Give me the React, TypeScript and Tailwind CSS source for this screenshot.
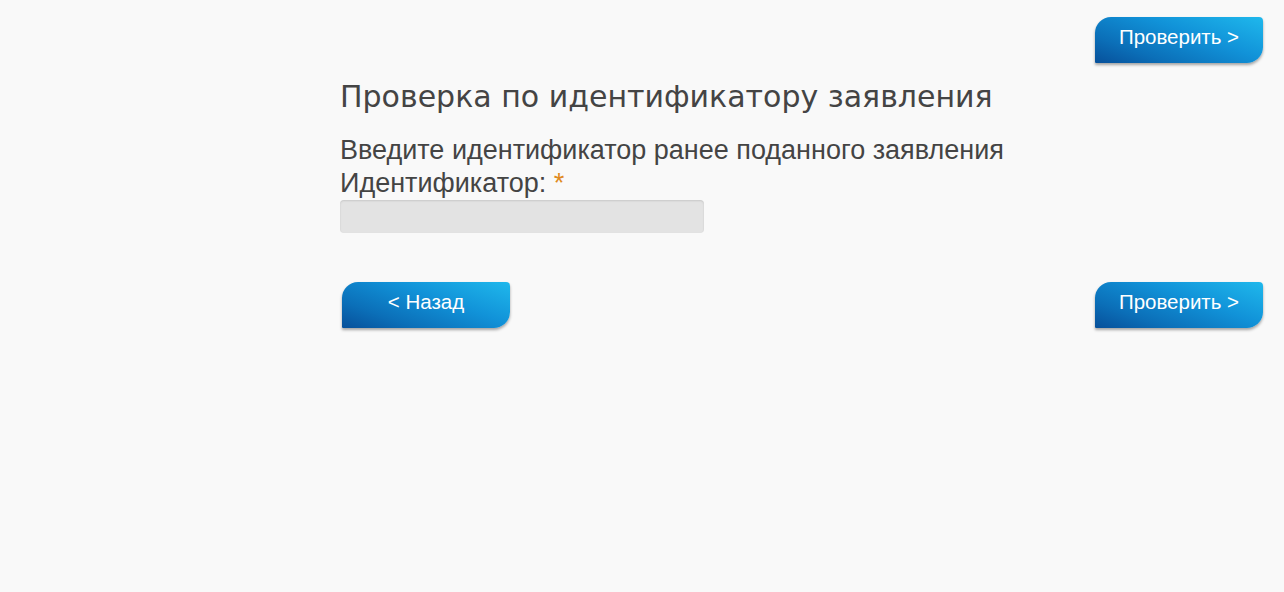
import React from 'react';

function BlueButton({ children }: { children: React.ReactNode }) {
    return (
        <button
            type="button"
            className="w-[168px] h-[46px] rounded-tl-[16px] rounded-br-[16px] rounded-tr-[4px] rounded-bl-[1px] bg-[linear-gradient(200deg,#1fb8ec_0%,#1192d8_40%,#0b6fb8_75%,#07509a_100%)] shadow-[0_2px_3px_rgba(0,0,0,0.35)] text-white text-[20.5px] leading-none font-['Liberation_Sans',Arial,sans-serif] flex items-center justify-center pb-[5px]"
        >
            {children}
        </button>
    );
}

export default function App() {
    return (
        <div className="min-h-[592px] bg-[#f9f9f9] text-[#444] font-['Liberation_Sans',Arial,sans-serif]">
            <div className="ml-[340px] mr-[21px] pt-[17px]">
                <div className="flex justify-end">
                    <BlueButton>Проверить &gt;</BlueButton>
                </div>

                <h1 className="mt-[17px] text-[30px] leading-[34px] font-['DejaVu_Sans',sans-serif] text-[#444]">
                    Проверка по идентификатору заявления
                </h1>

                <p className="mt-[20px] text-[27px] leading-[33px]">
                    Введите идентификатор ранее поданного заявления
                </p>
                <label className="block text-[27px] leading-[33px]">
                    Идентификатор: <span className="text-[#e08a1e]">*</span>
                </label>
                <input
                    type="text"
                    className="block w-[364px] h-[33px] rounded-[4px] bg-[#e3e3e3] shadow-[inset_0_1px_2px_rgba(0,0,0,0.12)] outline-none"
                />

                <div className="mt-[49px] flex justify-between pl-[2px]">
                    <BlueButton>&lt; Назад</BlueButton>
                    <BlueButton>Проверить &gt;</BlueButton>
                </div>
            </div>
        </div>
    );
}
